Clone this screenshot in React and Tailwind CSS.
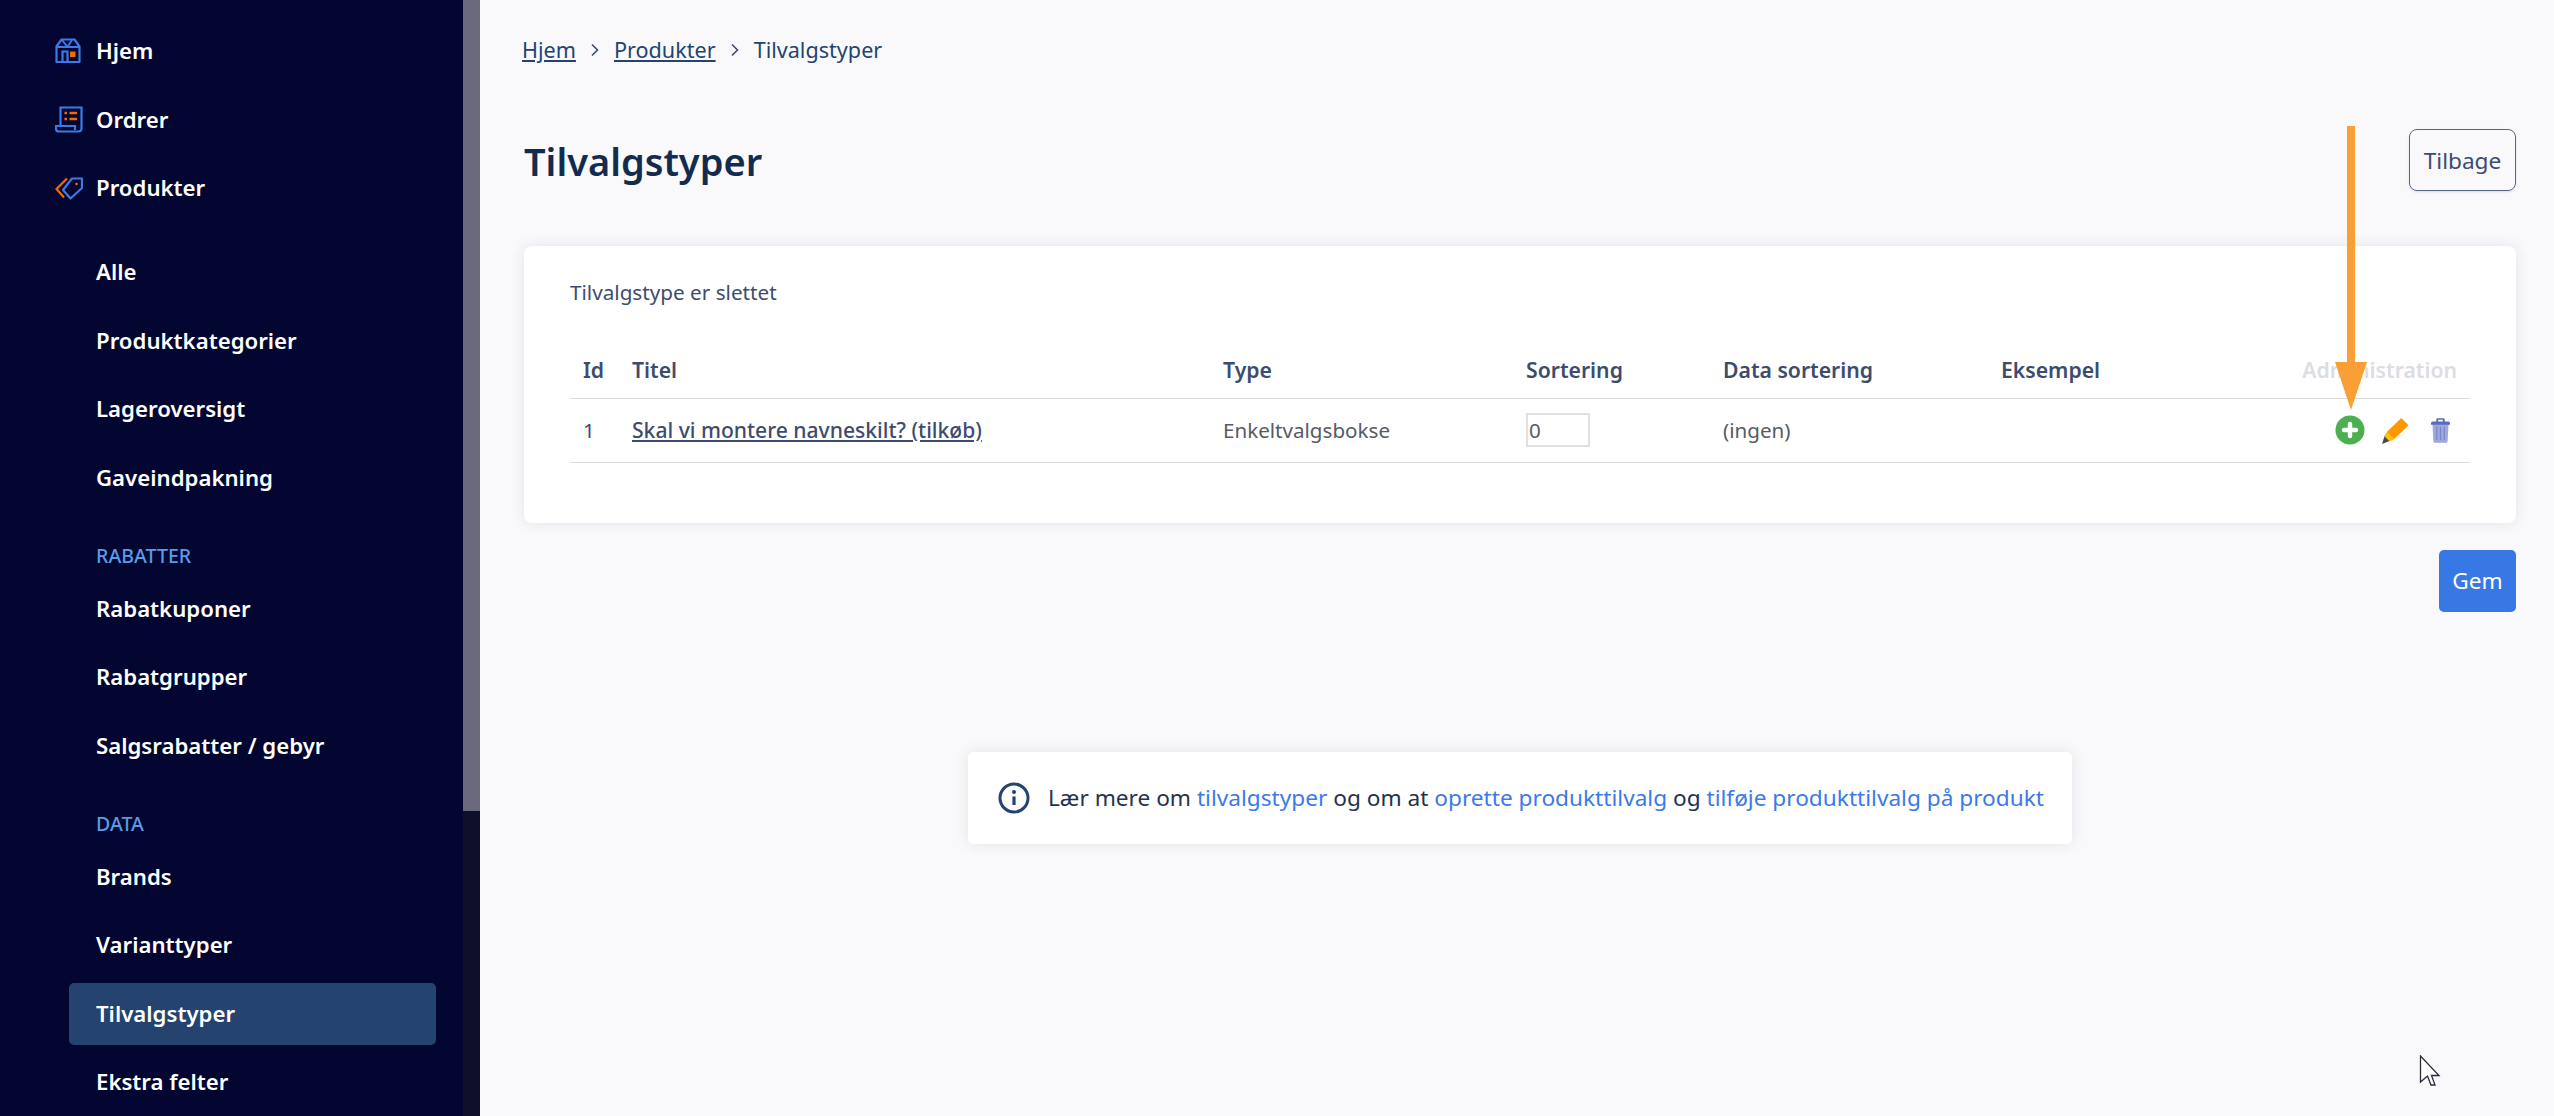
const mainMenu = [
    { label: "Hjem", icon: <HomeIcon /> },
    { label: "Ordrer", icon: <OrderIcon /> },
    { label: "Produkter", icon: <TagIcon /> },
];

const subMenu = ["Alle", "Produktkategorier", "Lageroversigt", "Gaveindpakning"];
const discountMenu = ["Rabatkuponer", "Rabatgrupper", "Salgsrabatter / gebyr"];
const dataMenu = ["Brands", "Varianttyper", "Tilvalgstyper", "Ekstra felter"];

function HomeIcon() {
    return (
        <svg width="26" height="26" viewBox="0 0 26 26" fill="none">
            <path d="M1.5 24V8.5L6.5 1.5H19.5L24.5 8.5V24Z" stroke="#3b7ae8" strokeWidth="2.2" strokeLinejoin="round" />
            <path d="M1.5 9H24.5M7 2L12.5 9M12.5 9L17 2" stroke="#3b7ae8" strokeWidth="2" />
            <path d="M7.5 24V13.5H12.5V24" stroke="#3b7ae8" strokeWidth="2.2" />
            <rect x="15" y="13.5" width="5.5" height="5.5" fill="#f26a00" />
        </svg>
    );
}

function OrderIcon() {
    return (
        <svg width="28" height="27" viewBox="0 0 28 27" fill="none">
            <path d="M5.5 19V1.5H26.5V22.5C26.5 24.5 25.5 25.5 23.5 25.5H4C2 25.5 1 24.3 1 22.5V20H20V24" stroke="#3b7ae8" strokeWidth="2.2" />
            <path d="M9.5 7H12M14.5 7H22M9.5 13H12M14.5 13H22" stroke="#f26a00" strokeWidth="2.6" />
        </svg>
    );
}

function TagIcon() {
    return (
        <svg width="28" height="23" viewBox="0 0 28 23" fill="none">
            <path d="M12 1.5L1.5 12L9 20.5" stroke="#f26a00" strokeWidth="2.2" />
            <path d="M17 1.5H27V11L15.5 21.5L8 13Z" stroke="#3b7ae8" strokeWidth="2.2" strokeLinejoin="round" />
            <circle cx="21.5" cy="7" r="1.3" fill="#f26a00" />
        </svg>
    );
}

function NavItem({ label, icon, active }) {
    return (
        <div className={`flex h-[62px] items-center rounded-[5px] pl-[27px] ${active ? "bg-[#24446f]" : ""}`}>
            {icon ? <span className="-ml-[41px] flex w-[41px] justify-start">{icon}</span> : null}
            <span>{label}</span>
        </div>
    );
}

function Sidebar() {
    return (
        <aside className="flex h-[1116px] w-[480px] shrink-0 overflow-hidden bg-[#020631] font-semibold text-white">
            <nav className="flex w-[463px] shrink-0 flex-col pt-[20px] pl-[69px] pr-[27px] text-[22.2px]">
                <div className="flex flex-col gap-[6.5px]">
                    {mainMenu.map((item) => (
                        <NavItem key={item.label} label={item.label} icon={item.icon} />
                    ))}
                </div>
                <div className="mt-[22px] flex flex-col gap-[6.5px]">
                    {subMenu.map((label) => (
                        <NavItem key={label} label={label} />
                    ))}
                </div>
                <div className="mt-[33px] pl-[27px] text-[19.6px] leading-[28px] font-medium text-[#5c9ae6]">RABATTER</div>
                <div className="mt-[8px] flex flex-col gap-[6.5px]">
                    {discountMenu.map((label) => (
                        <NavItem key={label} label={label} />
                    ))}
                </div>
                <div className="mt-[33px] pl-[27px] text-[19.6px] leading-[28px] font-medium text-[#5c9ae6]">DATA</div>
                <div className="mt-[8px] flex flex-col gap-[6.5px]">
                    {dataMenu.map((label) => (
                        <NavItem key={label} label={label} active={label === "Tilvalgstyper"} />
                    ))}
                </div>
            </nav>
            <div className="h-full w-[17px] bg-[#0e0f2a]">
                <div className="h-[811px] w-full bg-[#6a6a7c]" />
            </div>
        </aside>
    );
}

function Crumb() {
    return (
        <svg width="12" height="14" viewBox="0 0 12 14" fill="none" className="mx-[13px]">
            <path d="M3 1.5L8.5 7L3 12.5" stroke="#3d4c6e" strokeWidth="1.6" />
        </svg>
    );
}

function ActionIcons() {
    return (
        <div className="flex items-center justify-end gap-[17px] pr-[20px]">
            <svg width="30" height="30" viewBox="0 0 30 30">
                <circle cx="15" cy="15" r="14.5" fill="#4caf50" />
                <path d="M15 9V21M9 15H21" stroke="#fff" strokeWidth="4.4" strokeLinecap="round" />
            </svg>
            <svg width="27" height="27" viewBox="0 0 28 28">
                <path d="M0 28L3 19L8 25Z" fill="#4a4a4a" />
                <path d="M2.5 20L5 15.5L12.5 23L8 25.5Z" fill="#ffc107" />
                <path d="M5 15.5L20 1L27.5 8.5L12.5 23Z" fill="#ff9800" />
            </svg>
            <svg width="19" height="25" viewBox="0 0 20 26" className="ml-[5px]">
                <path d="M1.5 6H18.5L17.5 24C17.4 25.2 16.8 26 15.5 26H4.5C3.2 26 2.6 25.2 2.5 24Z" fill="#9fa8da" />
                <path d="M0 5.5C0 4 1 3.5 2 3.5H5.5V2C5.5 .6 6 0 7.5 0H12.5C14 0 14.5 .6 14.5 2V3.5H18C19 3.5 20 4 20 5.5V7H0ZM7.5 1.8V3.5H12.5V1.8Z" fill="#5c6bc0" fillRule="evenodd" />
                <path d="M6 9V23M10 9V23M14 9V23" stroke="#7986cb" strokeWidth="1.3" />
            </svg>
        </div>
    );
}

function Arrow() {
    return (
        <svg width="34" height="285" viewBox="0 0 34 285" className="absolute left-[2334px] top-[126px]">
            <path d="M13 0H21V236H33L17 284L1 236H13Z" fill="#fa9f36" />
        </svg>
    );
}

function Cursor() {
    return (
        <svg width="22" height="32" viewBox="0 0 22 32" className="absolute left-[2419px] top-[1055px]">
            <path d="M1.5 1V27L8.5 21L12 30H16L12.5 20.5H20Z" fill="#fff" stroke="#2a2a3c" strokeWidth="1.3" />
        </svg>
    );
}

export default function App() {
    return (
        <div className="relative flex h-[1116px] w-[2554px] overflow-hidden bg-[#f9f9fb] font-['Noto_Sans',sans-serif] text-[22.65px] text-[#3d4c6e]">
            <Sidebar />
            <main className="flex min-w-0 flex-1 flex-col pl-[44px] pr-[38px]">
                <div className="mt-[32px] flex h-[36px] items-center text-[21.6px] text-[#24446f]">
                    <a className="-ml-[2px] underline">Hjem</a>
                    <Crumb />
                    <a className="underline">Produkter</a>
                    <Crumb />
                    <span>Tilvalgstyper</span>
                </div>
                <div className="mt-[61px] flex items-center justify-between">
                    <h1 className="mt-[2px] text-[38px] leading-[60px] font-semibold text-[#142b50]">Tilvalgstyper</h1>
                    <button className="h-[62px] w-[107px] rounded-[8px] border border-[#56668a] pt-[2px] text-[#3d4c6e] shadow-sm">Tilbage</button>
                </div>
                <section className="mt-[55px] h-[277px] rounded-[8px] bg-white px-[46px] pt-[29px] shadow-[0_0_14px_rgba(30,40,80,0.1)]">
                    <p className="text-[20.7px] leading-[34px]">Tilvalgstype er slettet</p>
                    <table className="mt-[34px] w-full table-fixed border-collapse text-[20.6px]">
                        <thead>
                            <tr className="h-[55px] border-b border-[#dcdcdf] text-left text-[21.2px]">
                                <th className="w-[62px] pl-[13px] font-semibold">Id</th>
                                <th className="w-[591px] font-semibold">Titel</th>
                                <th className="w-[303px] font-semibold">Type</th>
                                <th className="w-[197px] font-semibold">Sortering</th>
                                <th className="w-[278px] font-semibold">Data sortering</th>
                                <th className="w-[220px] font-semibold">Eksempel</th>
                                <th className="pr-[13px] text-right font-semibold text-[#dcdde3]">Administration</th>
                            </tr>
                        </thead>
                        <tbody className="text-[#565b66]">
                            <tr className="h-[64px] border-b border-[#dcdcdf]">
                                <td className="pl-[13px] text-[#3d4c6e]">1</td>
                                <td><a className="text-[21.1px] font-medium text-[#3d4c6e] underline">Skal vi montere navneskilt? (tilkøb)</a></td>
                                <td>Enkeltvalgsbokse</td>
                                <td>
                                    <input readOnly value="0" className="h-[34px] w-[64px] border-2 border-[#e0e0e0] pl-[1px] outline-none" />
                                </td>
                                <td>(ingen)</td>
                                <td />
                                <td><ActionIcons /></td>
                            </tr>
                        </tbody>
                    </table>
                </section>
                <div className="mt-[27px] flex justify-end">
                    <button className="h-[62px] w-[77px] rounded-[5px] bg-[#3878e4] text-white">Gem</button>
                </div>
                <div className="mt-[140px] flex justify-center">
                    <div className="flex h-[92px] w-[1104px] items-center rounded-[5px] bg-white pl-[30px] text-[#24324f] shadow-[0_0_14px_rgba(30,40,80,0.1)]">
                        <svg width="32" height="32" viewBox="0 0 32 32" fill="none" className="mr-[18px] shrink-0">
                            <circle cx="16" cy="16" r="14" stroke="#24446f" strokeWidth="3" />
                            <circle cx="16" cy="10" r="2" fill="#24446f" />
                            <path d="M16 14.5V23" stroke="#24446f" strokeWidth="3.2" />
                        </svg>
                        <p>
                            Lær mere om <a className="text-[#3b7ae8]">tilvalgstyper</a> og om at <a className="text-[#3b7ae8]">oprette produkttilvalg</a> og <a className="text-[#3b7ae8]">tilføje produkttilvalg på produkt</a>
                        </p>
                    </div>
                </div>
            </main>
            <Arrow />
            <Cursor />
        </div>
    );
}
